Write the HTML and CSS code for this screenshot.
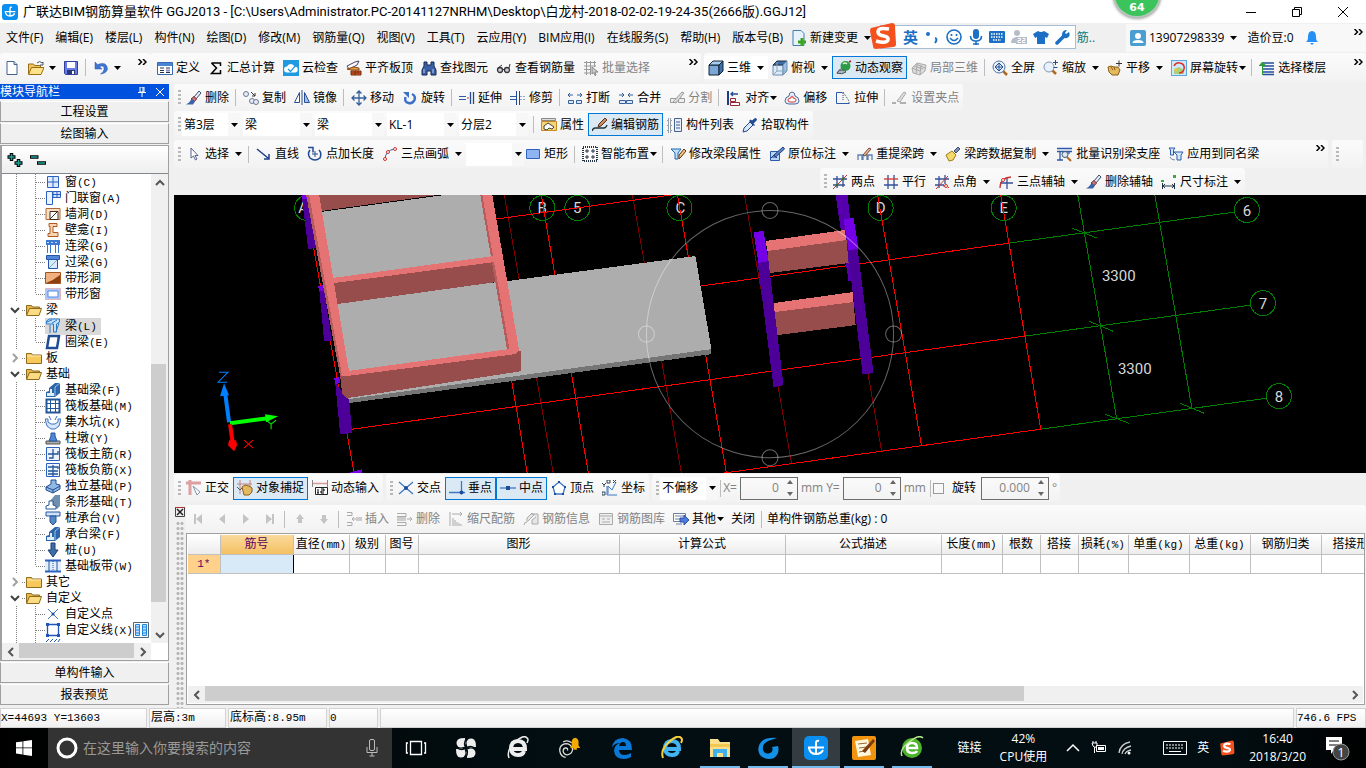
FILE: index.html
```html
<!DOCTYPE html>
<html lang="zh-CN">
<head>
  <meta charset="UTF-8">
  <title>广联达BIM钢筋算量软件 GGJ2013</title>
  <meta name="viewport" content="width=device-width, initial-scale=1.0">
  <link rel="stylesheet" href="styles.css">
</head>
<body>

<!-- icon sprite -->
<svg class="sprite" aria-hidden="true">
  <symbol id="caret" viewBox="0 0 7 4"><path d="M0 0h7L3.500 4z" fill="#000"/></symbol>
  <symbol id="more" viewBox="0 0 9 6"><path d="M.5 0l3 3-3 3M5 0l3 3-3 3" fill="none" stroke="#000" stroke-width="1.500"/></symbol>
  <symbol id="app" viewBox="0 0 24 24"><rect width="24" height="24" rx="5" fill="#0a8ff0"/><path d="M15 5q-3-1-3 2v11M4 11.500h16M5 12q1 6 7 6 5 0 7-4" fill="none" stroke="#fff" stroke-width="2"/></symbol>
  <symbol id="new" viewBox="0 0 16 16"><path d="M3 1.500h7l3 3v10H3z" fill="#fff" stroke="#44618f"/><path d="M10 1.500v3h3" fill="#cde" stroke="#44618f"/></symbol>
  <symbol id="open" viewBox="0 0 16 16"><path d="M.5 14V4h5l1 1.500h6V8" fill="#f3c55f" stroke="#9a6d10"/><path d="M.5 14.500l3-7H16l-3 7z" fill="#ffe28a" stroke="#9a6d10"/><path d="M9 3q3-3 5 0l1-1v3h-3" fill="none" stroke="#456"/></symbol>
  <symbol id="save" viewBox="0 0 16 16"><path d="M1.500 1.500h13v13h-12l-1-1z" fill="#6a7be8" stroke="#30409b"/><path d="M4 2h8v6H4z" fill="#fff"/><path d="M4 10h8v4H4z" fill="#293a78"/><path d="M9 11h2v3H9z" fill="#fff"/></symbol>
  <symbol id="undo" viewBox="0 0 16 16"><path d="M2 2v7h7L6.500 6.500q5-2 4.500 3-.5 3-3.500 4.500 6-.5 7-5Q14 1 4.500 4.500z" fill="#3f76d6" stroke="#2d56a8" stroke-width=".5"/></symbol>
  <symbol id="define" viewBox="0 0 16 16"><path d="M.5 2.500h15v12H.5z" fill="#fff" stroke="#3568b5"/><path d="M1 3h14v3H1z" fill="#4c84d4"/><path d="M3 8h4M3 10.500h4M3 12.500h4M9 8h4M9 12.500h4" stroke="#234"/><path d="M9 9.500h4v2H9z" fill="#88b"/></symbol>
  <symbol id="sum" viewBox="0 0 16 16"><path d="M3.500 3h9v3M12.500 10v3.500h-9L8.500 8l-5-5" fill="none" stroke="#000" stroke-width="1.500"/></symbol>
  <symbol id="cloud" viewBox="0 0 16 16"><rect width="16" height="16" fill="#1e9be0"/><path d="M4 12.500a3 3 0 0 1 0-6 4 4 0 0 1 7.500 0 3 3 0 0 1 .5 6z" fill="#fff"/><path d="M5 9l2.500 2.500L13 5" fill="none" stroke="#1e9be0" stroke-width="1.200"/></symbol>
  <symbol id="align-top" viewBox="0 0 16 16"><path d="M1 6l8-4 4-1-2 4-8 4z" fill="#fff" stroke="#446"/><path d="M1 9l7-2 5 1v2H5z" fill="#e7a04a" stroke="#8a4a12"/><path d="M5 11h10v4H5z" fill="#d8622c" stroke="#7a2b0b"/><path d="M5 13h10M9 11v4M12 11v2" stroke="#7a2b0b"/></symbol>
  <symbol id="find" viewBox="0 0 16 16"><path d="M3 2h3v3h4V2h3v4l2 4v5h-5v-4H6v4H1v-5l2-4z" fill="#3b5fa4" stroke="#162a55"/><path d="M3 9v4M12 9v4" stroke="#b9ccf0"/></symbol>
  <symbol id="glasses" viewBox="0 0 16 16"><circle cx="4" cy="10" r="2.500" fill="#ccd" stroke="#333" stroke-width="1.300"/><circle cx="11" cy="10" r="2.500" fill="#ccd" stroke="#333" stroke-width="1.300"/><path d="M6.500 9.500h2M2 8l4-3M13 8l1-4" stroke="#333" fill="none"/></symbol>
  <symbol id="batch" viewBox="0 0 16 16"><path d="M1 2.500h12M1 6h12M1 9.500h7M1 13h7M3.500 1v14M7.500 1v14M11.500 1v6" stroke="#999"/><path d="M9 7l6 5-3 0 1 3-1 .5-1.500-3L9 14z" fill="#ccc" stroke="#888"/></symbol>
  <symbol id="cube" viewBox="0 0 16 16"><path d="M1 5h10v10H1z" fill="#7ba7d8" stroke="#123"/><path d="M1 5l4-4h10l-4 4z" fill="#a9cbef" stroke="#123"/><path d="M11 5l4-4v10l-4 4z" fill="#3f6ea8" stroke="#123"/></symbol>
  <symbol id="topview" viewBox="0 0 16 16"><path d="M1 5h10v10H1z" fill="#dfeaf8" stroke="#6b8cb5"/><path d="M1 5l4-4h10l-4 4z" fill="#3d6ca6" stroke="#234"/><path d="M11 5l4-4v10l-4 4z" fill="#9fbfe3" stroke="#6b8cb5"/><path d="M5 2v9l-4 4M5 11h10" stroke="#8ab" fill="none"/></symbol>
  <symbol id="orbit" viewBox="0 0 16 16"><path d="M1 14q1-4 5-6" stroke="#555" fill="none"/><circle cx="9.500" cy="6" r="5" fill="#2f9a49"/><path d="M7 4q2-2 4 0" stroke="#d6f7c8" fill="none" stroke-width="1.500"/><path d="M1 13q2-4 5-3 3 0 4 2-4 3-9 1z" fill="#a9b7bf" stroke="#455"/><path d="M13 2l2-1" stroke="#b12" stroke-width="1.500"/></symbol>
  <symbol id="local3d" viewBox="0 0 16 16"><path d="M1 8l5-5 9 2-1 6-5 4-7-2z" fill="#ddd" stroke="#aaa"/><path d="M3 6l9 3M5 4l9 4M1 8l8 3M9 15l1-10M5 14l1-9" stroke="#aaa"/></symbol>
  <symbol id="fullscreen" viewBox="0 0 16 16"><path d="M11 11l4 4" stroke="#b06a20" stroke-width="2.500"/><circle cx="7" cy="7" r="6" fill="#e9f2fc" stroke="#56749f"/><path d="M3 7h8M7 3v8M5 5l2-2 2 2M5 9l2 2 2-2M5 5L3 7l2 2M9 5l2 2-2 2" stroke="#1f4e96" fill="none"/></symbol>
  <symbol id="zoom" viewBox="0 0 16 16"><path d="M9 10l4 4" stroke="#b06a20" stroke-width="2.500"/><circle cx="6" cy="7" r="5" fill="#e9f2fc" stroke="#8296b3"/><path d="M10 2.500h5M12.500 0v5M10.500 7.500h4" stroke="#2a4c86"/></symbol>
  <symbol id="pan" viewBox="0 0 16 16"><path d="M9 3.500h6M12 .5v6" stroke="#333"/><path d="M1 7l3-1 3 1 4 0 2 3-2 5H5L2 12z" fill="#e4b85c" stroke="#8b5f17"/><path d="M4 7l2 3M7 7l1 3" stroke="#8b5f17"/></symbol>
  <symbol id="screenrot" viewBox="0 0 16 16"><rect x=".5" y=".5" width="15" height="15" fill="#cfe8fb" stroke="#5aa7dd"/><path d="M3 9l5-2 5 3v4H3z" fill="#a9d17a"/><circle cx="5" cy="10" r="1.500" fill="#f0c63c"/><path d="M3 6q2-4 6-3 5 1 4 6-1 4-5 4" fill="none" stroke="#e0322c" stroke-width="1.500"/></symbol>
  <symbol id="floors" viewBox="0 0 16 16"><path d="M4 3h11M4 6h11M4 9h11M4 12h11M4 14.500h11" stroke="#214f9e" stroke-width="1.300"/><path d="M3.500 15V6M0 6l3.500-4L7 6" fill="#2f9a3c" stroke="#2f9a3c"/></symbol>
  <symbol id="brush" viewBox="0 0 16 16"><path d="M8 7l5-6 2 2-5 6z" fill="#e6edf7" stroke="#3b4d70"/><path d="M5 9l3-2.500L10.500 9 8 12z" fill="#d8756e" stroke="#7b2d28"/><path d="M0 14.500h7l2-3-3-3-3 4z" fill="#3c62a8"/></symbol>
  <symbol id="copy" viewBox="0 0 16 16"><g fill="#e6ebf4" stroke="#6a7a96"><circle cx="3" cy="4" r="2.500"/><circle cx="9" cy="11" r="2.500"/><circle cx="13" cy="12" r="2.500"/></g><path d="M8 2l4 4M12 3v3H9" stroke="#333" fill="none"/></symbol>
  <symbol id="mirror" viewBox="0 0 16 16"><path d="M5.500 2.500v10h-5z" fill="#fff" stroke="#2b4f95"/><path d="M10.500 2.500v10h5z" fill="#9fc0ee" stroke="#2b4f95"/><path d="M8 0v15" stroke="#2b4f95"/></symbol>
  <symbol id="move" viewBox="0 0 16 16"><path d="M8 1v14M1 8h14M5.500 3.500L8 1l2.500 2.500M5.500 12.500L8 15l2.500-2.500M3.500 5.500L1 8l2.500 2.500M12.500 5.500L15 8l-2.500 2.500" fill="none" stroke="#35609c" stroke-width="1.300"/></symbol>
  <symbol id="rotate" viewBox="0 0 16 16"><path d="M10 4q4 2 2.500 6-2 4-6 3Q2 12 3.500 7" fill="none" stroke="#3b70c9" stroke-width="2.500"/><path d="M1 2h6v6z" fill="#3b70c9"/></symbol>
  <symbol id="extend" viewBox="0 0 16 16"><path d="M0 6.500h7M0 9.500h7" stroke="#2c5aa8"/><path d="M8 8h2" stroke="#c33"/><path d="M11.500 2v12M14.500 2v12" stroke="#234b93" stroke-width="1.300"/></symbol>
  <symbol id="trim" viewBox="0 0 16 16"><path d="M6.500 1v14M9.500 1v14" stroke="#234b93"/><path d="M0 6.500h6M0 9.500h6" stroke="#2c5aa8"/><path d="M10 6.500h6M10 9.500h6" stroke="#8ba8d4" stroke-dasharray="2 1"/></symbol>
  <symbol id="break" viewBox="0 0 16 16"><path d="M1.500 10.500h5v3h-5zM9.500 10.500h5v3h-5z" fill="#dfe8f6" stroke="#35609c"/><path d="M6 5H1l2-2M1 5l2 2M10 5h5l-2-2M15 5l-2 2" stroke="#35609c" fill="none"/></symbol>
  <symbol id="merge" viewBox="0 0 16 16"><path d="M1.500 10.500h6v3h-6zM8.500 10.500h6v3h-6z" fill="#dfe8f6" stroke="#35609c"/><path d="M1 5h5L4 3M6 5L4 7M15 5h-5l2-2M10 5l2 2" stroke="#35609c" fill="none"/></symbol>
  <symbol id="split" viewBox="0 0 16 16"><path d="M1.500 8.500h6v4h-6zM9.500 8.500h6v4h-6z" fill="#eee" stroke="#999"/><path d="M4 12l9-10 2 1-8 10z" fill="#ddd" stroke="#999"/></symbol>
  <symbol id="alignbar" viewBox="0 0 16 16"><path d="M2 1v14" stroke="#1b3f86" stroke-width="2"/><path d="M4.500 8.500h5v3h-5zM4.500 12.500h9v3h-9z" fill="#fff" stroke="#9c2330"/><path d="M5 4h7M7 2L5 4l2 2" stroke="#234b93" fill="none" stroke-width="1.300"/></symbol>
  <symbol id="offset" viewBox="0 0 16 16"><path d="M5 6q0-4 3-4t3 4q4 1 4 5 0 3-4 3H5q-4 0-4-3 0-4 4-5z" fill="#e9eef7" stroke="#4a6a9e"/><path d="M7 8q0-2 1-2t1 2q3 0 3 2t-2 2H6q-2 0-2-2t3-2z" fill="#fff" stroke="#d23a33"/></symbol>
  <symbol id="stretch" viewBox="0 0 16 16"><path d="M7.500 2.500h-6v11h13" fill="none" stroke="#2c5aa8"/><path d="M8 2l6 9v2M8 3v8" fill="none" stroke="#345" stroke-dasharray="1 1"/></symbol>
  <symbol id="grip-pt" viewBox="0 0 16 16"><path d="M0 13h4M8 13h6" stroke="#999" stroke-width="1.500"/><path d="M5 11l7-9 2 1-6 9z" fill="#ddd" stroke="#aaa"/></symbol>
  <symbol id="props" viewBox="0 0 16 16"><path d="M.5 1.500h14v2H.5z" fill="#ddd" stroke="#888"/><path d="M.5 4.500h15v9H.5z" fill="#f6d27b" stroke="#c98a1c"/><path d="M3 12V9l4-3 6 4-2 2-3-1-2 2z" fill="#fff" stroke="#443"/></symbol>
  <symbol id="editbar" viewBox="0 0 16 16"><path d="M0 14q1-3 3-3h9q2 0 3-3" fill="none" stroke="#233" stroke-width="1.300"/><path d="M6 10l1-3 6-6 2 2-6 6z" fill="#c98a5c" stroke="#5b3320"/></symbol>
  <symbol id="list" viewBox="0 0 16 16"><path d="M1 2h3v3H1zM1 7h3v3H1zM1 12h3v3H1z" fill="#fff" stroke="#345" stroke-dasharray="1 1"/><path d="M7.500 1.500h7v13h-7z" fill="#e8eefa" stroke="#44618f"/><path d="M9 5h4M9 8h4M9 11h4" stroke="#44618f"/></symbol>
  <symbol id="picker" viewBox="0 0 16 16"><path d="M1 15l1-4 6-6 3 3-6 6z" fill="#d8e8fb" stroke="#26488a"/><path d="M7 4l5 5 1-1-1.500-1.500L15 3q0-2-2-2l-3 2.500L8.500 2.500z" fill="#234a94"/></symbol>
  <symbol id="cursor" viewBox="0 0 16 16"><path d="M5 2v10l2.500-2 2 4 1.500-1-2-3.500h3z" fill="#fff" stroke="#56658a"/></symbol>
  <symbol id="line" viewBox="0 0 16 16"><path d="M1 3l11 9M13 8v5H8" fill="none" stroke="#1e3f86" stroke-width="1.500"/></symbol>
  <symbol id="addlen" viewBox="0 0 16 16"><path d="M3 4q-3 4 0 8 5 4 10 0 2-5-1-8" fill="none" stroke="#234b93" stroke-width="1.500"/><path d="M1 1.500h5v5" fill="none" stroke="#234b93" stroke-width="1.500"/><path d="M5 8h6M8 5v6" stroke="#234b93"/></symbol>
  <symbol id="arc3" viewBox="0 0 16 16"><path d="M3 14Q3 4 13 3" fill="none" stroke="#345b9c"/><g fill="#fff" stroke="#d2322d"><circle cx="3" cy="13" r="1.500"/><circle cx="6" cy="6" r="1.500"/><circle cx="13" cy="3" r="1.500"/></g></symbol>
  <symbol id="rect" viewBox="0 0 16 16"><path d="M1.500 3.500h13v9h-13z" fill="#8fb4f2" stroke="#2f62bd"/></symbol>
  <symbol id="smart" viewBox="0 0 16 16"><rect x="1" y="1" width="14" height="14" fill="#fff" stroke="#234" stroke-width="2" stroke-dasharray="1 1"/><path d="M5 3v4M3 5h4M11 3v4M9 5h4M5 9v4M3 11h4M11 9v4M9 11h4" stroke="#234"/></symbol>
  <symbol id="beamedit" viewBox="0 0 16 16"><path d="M1 3h10L8 7v6H5V7z" fill="#bfe0fb" stroke="#1e66b4"/><path d="M9 13V9l5-6 2 2-5 6z" fill="#f0c07a" stroke="#633a14"/></symbol>
  <symbol id="annot" viewBox="0 0 16 16"><path d="M1.500 5.500h9v9h-9z" fill="#b8d3f5" stroke="#2c5aa8"/><path d="M2 12l3-3 3 3M5 9l9-8 1.500 2-9 8z" fill="#5d88c9" stroke="#1f3f7c"/></symbol>
  <symbol id="respan" viewBox="0 0 16 16"><path d="M1 14V9h4v5M6 14V9h4v5M11 14V9h4v5" fill="none" stroke="#5d7fae" stroke-width="1.300"/><path d="M6 9l6-7 2 1-6 7z" fill="#eabf80" stroke="#744"/></symbol>
  <symbol id="spancopy" viewBox="0 0 16 16"><path d="M9 5l4-4 2 2-4 4z" fill="#7d8fb5" stroke="#3b4d70"/><path d="M1 9l6-4 4 4-3 5-4 1z" fill="#f4da6a" stroke="#9c7d17"/></symbol>
  <symbol id="batchbeam" viewBox="0 0 16 16"><path d="M0 2.500h15M0 5.500h15M3 5v9M0 14h6M12 5v3" stroke="#2c5aa8" stroke-width="1.300"/><circle cx="8" cy="8.500" r="3" fill="#dbe9f8" stroke="#456"/><path d="M10 11l4 4" stroke="#b06a20" stroke-width="2"/></symbol>
  <symbol id="apply" viewBox="0 0 16 16"><path d="M1 2h6L5.500 4v5h-3V4zM6 6h9l-2 3v5H9V9z" fill="#d4e9fb" stroke="#2c5aa8"/><path d="M2 11q1 3 5 3" fill="none" stroke="#789"/></symbol>
  <symbol id="twopt" viewBox="0 0 16 16"><path d="M5 2v12M11 1v12M1 5h14M1 11h12" stroke="#35509a" stroke-width="1.300"/><path d="M1 15L15 1" stroke="#d2322d"/><circle cx="5" cy="11" r="1.500" fill="#3d6b2e"/><circle cx="11" cy="5" r="1.500" fill="#3d6b2e"/></symbol>
  <symbol id="parallel" viewBox="0 0 16 16"><path d="M5 1v14M11 1v14M1 11h14" stroke="#35509a" stroke-width="1.300"/><path d="M1 5h14" stroke="#d2322d" stroke-width="1.300"/></symbol>
  <symbol id="ptangle" viewBox="0 0 16 16"><path d="M5 2v12M11 1v9M1 5h14M1 11h9" stroke="#35509a" stroke-width="1.300"/><path d="M2 15L14 2M9 12h4M13 12l2 2" stroke="#d2322d"/><circle cx="12" cy="12" r="1.500" fill="#fff" stroke="#d2322d"/></symbol>
  <symbol id="arcaxis" viewBox="0 0 16 16"><path d="M9 3v12M2 9h13" stroke="#35509a" stroke-width="1.300"/><path d="M2 14Q2 4 13 3" fill="none" stroke="#d2322d" stroke-width="1.300"/><circle cx="5" cy="6" r="1.500" fill="#fff" stroke="#d2322d"/></symbol>
  <symbol id="dim" viewBox="0 0 16 16"><path d="M1.500 9v6M13.500 9v6M1 12h13M4 10l-2 2 2 2M11 10l2 2-2 2" stroke="#234" fill="none"/><path d="M0 6h3v2H0zM12 1h3v3h-3z" fill="#3fa545"/></symbol>
  <symbol id="ortho" viewBox="0 0 16 16"><path d="M0 3h15M4 0v15" stroke="#dca0a0" stroke-width="3"/><path d="M7 6l7 6-3 3z" fill="#fff" stroke="#8494ab"/></symbol>
  <symbol id="snap" viewBox="0 0 16 16"><path d="M3 0v14M13 0v7M0 4h15" stroke="#c4807e"/><path d="M0 7l3 3 3-3" stroke="#456" fill="none"/><path d="M5 7l3-2 4 1 3 2v4l-3 3H7z" fill="#e3ba62" stroke="#8b5f17"/></symbol>
  <symbol id="dynin" viewBox="0 0 16 16"><path d="M.5 0v7M15.500 0v7" stroke="#888"/><path d="M1 3.500h14" stroke="#d99" stroke-width="1.500"/><path d="M3.500 7.500h12v7h-12z" fill="#fff" stroke="#222"/><path d="M6 9v4M5 13h2M9 9h3v2H9v2h3" fill="none" stroke="#000"/></symbol>
  <symbol id="cross" viewBox="0 0 16 16"><path d="M1 2l14 12M15 2L1 14" stroke="#3f77c4" stroke-width="1.300"/><circle cx="8" cy="8" r="2" fill="#1b4c9e"/></symbol>
  <symbol id="perp" viewBox="0 0 16 16"><path d="M0 12.500h16M12.500 1v11" stroke="#3f77c4" stroke-width="1.300"/><circle cx="12.500" cy="12.500" r="2" fill="#1b4c9e"/></symbol>
  <symbol id="mid" viewBox="0 0 16 16"><path d="M0 8h16" stroke="#3f77c4" stroke-width="1.300"/><path d="M6 6h4v4H6z" fill="#1b4c9e"/></symbol>
  <symbol id="vertex" viewBox="0 0 16 16"><path d="M8 2l6 5-2 7H4L2 7z" fill="#fff" stroke="#3f77c4" stroke-width="1.300"/><path d="M7 1h2v2H7zM1 6h2v2H1zM13 6h2v2h-2zM3 13h2v2H3zM11 13h2v2h-2z" fill="#1b4c9e"/></symbol>
  <symbol id="coord" viewBox="0 0 16 16"><path d="M6 14V6l4 4 4-8M5 6v9h10" fill="none" stroke="#3f77c4"/><path d="M0 3l2 2 2-2M2 5v2M0 12h3v3H0zM5 0h3v3H5zM11 0l3 3M14 0l-3 3" stroke="#345" fill="none"/></symbol>
  <symbol id="first" viewBox="0 0 16 16"><path d="M4 3h2v10H4zM12 3v10L6 8z" fill="#c4c4c4"/></symbol>
  <symbol id="prev" viewBox="0 0 16 16"><path d="M11 3v10L5 8z" fill="#c4c4c4"/></symbol>
  <symbol id="next" viewBox="0 0 16 16"><path d="M5 3v10l6-5z" fill="#c4c4c4"/></symbol>
  <symbol id="last" viewBox="0 0 16 16"><path d="M10 3h2v10h-2zM4 3v10l6-5z" fill="#c4c4c4"/></symbol>
  <symbol id="up" viewBox="0 0 16 16"><path d="M8 3l4 5h-2v4H6V8H4z" fill="#c4c4c4"/></symbol>
  <symbol id="down" viewBox="0 0 16 16"><path d="M8 13l4-5h-2V4H6v4H4z" fill="#c4c4c4"/></symbol>
  <symbol id="insert" viewBox="0 0 16 16"><path d="M1 1.500h5v3H1M1 11.500h5v3H1M6 8h4M8 6L6 8l2 2" fill="none" stroke="#aaa"/><path d="M10 6h6v4h-6z" fill="#ccc"/></symbol>
  <symbol id="remove" viewBox="0 0 16 16"><path d="M0 2.500h9v3H0M0 11.500h9v3H0M10 8h5M13 6l2 2-2 2" fill="none" stroke="#aaa"/><path d="M0 6h9v4H0z" fill="#ccc"/></symbol>
  <symbol id="scale" viewBox="0 0 16 16"><path d="M2 1v14M4 3h10M12 1l2 2-2 2M5 7v8M7 9v6M9 11v4M11 12v3M13 13v2" fill="none" stroke="#aaa"/></symbol>
  <symbol id="info" viewBox="0 0 16 16"><path d="M1 14q0-3 3-3V7l5-5 2 2-6 6M8 3h7v10H9V9l4-3" fill="#e6e6e6" stroke="#aaa"/></symbol>
  <symbol id="lib" viewBox="0 0 16 16"><path d="M1.500 2.500h13v11h-13z" fill="#eee" stroke="#aaa"/><path d="M2 5h12M4 8h3M4 11h8M9 8h3" stroke="#aaa"/></symbol>
  <symbol id="other" viewBox="0 0 16 16"><path d="M.5 2.500h12v8H.5z" fill="#fff" stroke="#6d7f9e"/><path d="M2 5h9M2 8h5M3 13h6" stroke="#6d7f9e"/><path d="M7 7h4V4l5 5-5 5v-3H7z" fill="#4d7ddc" stroke="#2a4fa3"/></symbol>
  <symbol id="newchg" viewBox="0 0 16 16"><path d="M2 .5h8l3 3v12H2z" fill="#e8f2fb" stroke="#3f7fb0"/><path d="M11 8v8M7 12h8" stroke="#3aa51e" stroke-width="3"/></symbol>
  <symbol id="user" viewBox="0 0 16 16"><rect width="16" height="16" rx="2" fill="#4a9fd0"/><circle cx="8" cy="6" r="3" fill="#fff"/><path d="M2.500 13q0-3 5.500-3t5.500 3z" fill="#fff"/></symbol>
  <symbol id="bell" viewBox="0 0 16 16"><path d="M8 1q4 0 4 6 0 4 2 5H2q2-1 2-5 0-6 4-6z" fill="#2490f5"/><path d="M6 13h4l-2 2z" fill="#2490f5"/></symbol>

  <!-- tree guides -->
  <symbol id="t-mid" viewBox="0 0 44 16"><path d="M15.500 0v16M34.500 0v16M35 8.500h9" stroke="#808080" stroke-dasharray="1 1" fill="none"/></symbol>
  <symbol id="t-end" viewBox="0 0 44 16"><path d="M15.500 0v16M34.500 0v8M35 8.500h9" stroke="#808080" stroke-dasharray="1 1" fill="none"/></symbol>
  <symbol id="t-open" viewBox="0 0 25 16"><path d="M10 6l4 4 4-4" stroke="#404040" stroke-width="2" fill="none"/><path d="M21 8.500h4" stroke="#808080" stroke-dasharray="1 1"/></symbol>
  <symbol id="t-shut" viewBox="0 0 25 16"><path d="M12 4l4 4-4 4" stroke="#a0a0a0" stroke-width="2" fill="none"/><path d="M21 8.500h4" stroke="#808080" stroke-dasharray="1 1"/></symbol>
  <symbol id="fo" viewBox="0 0 16 16"><path d="M.5 13V3.500h5l1 1.500h7v2" fill="#e7b94a" stroke="#8d6a1c"/><path d="M.5 13.500l3-7h12l-2.500 7z" fill="#fbdc82" stroke="#8d6a1c"/></symbol>
  <symbol id="fc" viewBox="0 0 16 16"><path d="M.5 13.500v-10h5l1 1.500h9v8.500z" fill="#f6c95a" stroke="#8d6a1c"/><path d="M1 6h14" stroke="#ffeeb5"/></symbol>
  <symbol id="n-win" viewBox="0 0 16 16"><path d="M2.500 2.500h11v11h-11z" fill="#dcebff" stroke="#2b60c0"/><path d="M8 2v12M2 8h12" stroke="#2b60c0"/></symbol>
  <symbol id="n-door" viewBox="0 0 16 16"><path d="M1.500 1.500h6v13h-6z" fill="#e9f2ff" stroke="#2b60c0"/><path d="M8 1.500h7.500v6H8zM12 1v7M8 4.500h8" fill="#cfe2ff" stroke="#2b60c0"/></symbol>
  <symbol id="n-hole" viewBox="0 0 16 16"><path d="M1 2.500h14v11H1z" fill="#f9dfc8" stroke="#b26a35"/><path d="M5 5.500h8v8H5zM5 13l8-8" fill="#fff" stroke="#442a1a"/></symbol>
  <symbol id="n-niche" viewBox="0 0 16 16"><path d="M4 1.500h8v3H8v6h5v4H3v-3h2v-7H4z" fill="#f8d5b4" stroke="#b0581c"/></symbol>
  <symbol id="n-link" viewBox="0 0 16 16"><path d="M1 2h14v5H1z" fill="#3c77d0"/><path d="M2.500 7v8M5.500 7v8M10.500 7v8M13.500 7v8" stroke="#3c77d0"/><path d="M2 4.500h12" stroke="#bcd7ff" stroke-dasharray="2 2"/></symbol>
  <symbol id="n-lintel" viewBox="0 0 16 16"><path d="M1.500 1.500h13v4h-13z" fill="#4f86d8" stroke="#2456a8"/><path d="M3.500 5.500h9v9h-9z" fill="#d9e9ff" stroke="#2456a8"/><path d="M4 14l8-8" stroke="#8ab"/></symbol>
  <symbol id="n-band" viewBox="0 0 16 16"><path d="M.5 2.500h15v11H.5z" fill="#f0b080" stroke="#a0561c"/><path d="M1 13q8-3 14-8v8z" fill="#8e3f10"/></symbol>
  <symbol id="n-bandw" viewBox="0 0 16 16"><path d="M.5 2.500h15v11H.5z" fill="#a9c8fa" stroke="#e3b7b7"/><path d="M3 5h10v6H3z" fill="#fff" stroke="#5a8be0"/></symbol>
  <symbol id="n-beam" viewBox="0 0 16 16"><path d="M1.500 3l3-2h10v3l-3 2v8h-3V6h-7z" fill="#c4e2fb" stroke="#2a78c8"/><path d="M5 15V7M2 4l5-2M7 5l5-3M11 14l3-9" stroke="#2a78c8"/></symbol>
  <symbol id="n-ring" viewBox="0 0 16 16"><path d="M4 2h10l-2 12H2z" fill="#fff" stroke="#1f4d94" stroke-width="2.500"/></symbol>
  <symbol id="n-fbeam" viewBox="0 0 16 16"><path d="M1 15v-5l3-1V6l6-5h5v10l-5 4z" fill="#2b66a8"/><path d="M2 14v-3h3V7h2v4h2v3z" fill="#dcecfb"/><path d="M10 5l5-4M10 14V5" stroke="#9cc3ea"/></symbol>
  <symbol id="n-raft" viewBox="0 0 16 16"><path d="M1.500 1.500h13v13h-13z" fill="#fff" stroke="#24569a" stroke-width="2"/><path d="M5.500 1v14M10.500 1v14M1 5.500h14M1 10.500h14" stroke="#24569a"/></symbol>
  <symbol id="n-pit" viewBox="0 0 16 16"><path d="M0 5h3v3l3 2h4l3-2V5h3l-2 7-4 3H6l-4-3z" fill="#d6e6fb" stroke="#3e74c4"/><path d="M4 2l2 4M12 2l-2 4" stroke="#3e74c4"/></symbol>
  <symbol id="n-pier" viewBox="0 0 16 16"><path d="M1 11h14v3H1z" fill="#aaa" stroke="#555"/><path d="M4 11l2-5V3h4v3l2 5z" fill="#4f86d8" stroke="#24569a"/></symbol>
  <symbol id="n-main" viewBox="0 0 16 16"><path d="M1.500 1.500h13v13h-13z" fill="#edf4ff" stroke="#2b60c0"/><path d="M8 3v9H4M3 8h10V5" fill="none" stroke="#24569a" stroke-width="1.300"/></symbol>
  <symbol id="n-neg" viewBox="0 0 16 16"><path d="M1.500 1.500h13v13h-13z" fill="#edf4ff" stroke="#2b60c0"/><path d="M8 3v11M3 5h10v2M3 9h10M3 12h10" fill="none" stroke="#24569a" stroke-width="1.300"/></symbol>
  <symbol id="n-iso" viewBox="0 0 16 16"><path d="M1 9l5-3V2h5v4l4 1v4l-7 4-7-3z" fill="#8fb8e4" stroke="#1f4d94"/><path d="M1 9l7 3 7-4M8 12v3" fill="none" stroke="#1f4d94"/></symbol>
  <symbol id="n-strip" viewBox="0 0 16 16"><path d="M5 7l5-6h5v11l-3 3z" fill="#6f8fae"/><path d="M1 15v-3l3-1V7h4v4l3 1v3z" fill="#fff" stroke="#24569a"/></symbol>
  <symbol id="n-cap" viewBox="0 0 16 16"><path d="M1 2h14v4H1z" fill="#cfe2f7" stroke="#24569a"/><path d="M5 6h6v6l-3 3-3-3z" fill="#5589c6" stroke="#24569a"/></symbol>
  <symbol id="n-pile" viewBox="0 0 16 16"><path d="M6 1h4v7h3l-5 7-5-7h3z" fill="#3c6ea8" stroke="#1b3f70"/></symbol>
  <symbol id="n-slab" viewBox="0 0 16 16"><path d="M0 2h16v12H0z" fill="#e3efff"/><path d="M0 2.500h16M0 13.500h16" stroke="#2b60c0" stroke-width="2"/><path d="M4 3v10M12 3v10" stroke="#24569a"/><path d="M8 3v10" stroke="#24569a" stroke-dasharray="1 1"/></symbol>
  <symbol id="n-point" viewBox="0 0 16 16"><path d="M3 3l10 10M13 3L3 13" stroke="#3f77c4"/><circle cx="8" cy="8" r="1.500" fill="#1b4c9e"/></symbol>
  <symbol id="n-line" viewBox="0 0 16 16"><path d="M2.500 2.500h11v11h-11z" fill="#fff" stroke="#1f55b8" stroke-width="1.300"/><path d="M1 1h3v3H1zM12 1h3v3h-3zM1 12h3v3H1zM12 12h3v3h-3z" fill="#1f55b8"/></symbol>
  <symbol id="n-area" viewBox="0 0 16 16"><path d="M1 4l3-3M5 4l3-3M9 4l3-3M13 4l2-3" stroke="#1f55b8"/></symbol>
  <symbol id="s-up" viewBox="0 0 10 10"><path d="M1 7l4-4 4 4" fill="none" stroke="#555" stroke-width="2"/></symbol>
  <symbol id="s-down" viewBox="0 0 10 10"><path d="M1 3l4 4 4-4" fill="none" stroke="#555" stroke-width="2"/></symbol>
  <symbol id="s-left" viewBox="0 0 10 10"><path d="M7 1L3 5l4 4" fill="none" stroke="#555" stroke-width="2"/></symbol>
  <symbol id="s-right" viewBox="0 0 10 10"><path d="M3 1l4 4-4 4" fill="none" stroke="#555" stroke-width="2"/></symbol>
  <symbol id="spin" viewBox="0 0 6 16"><path d="M0 4l3-4 3 4zM0 12l3 4 3-4z" fill="#666"/></symbol>
</svg>

<header class="titlebar">
  <svg class="icon"><use href="#app"/></svg>
  <h1>广联达BIM钢筋算量软件 GGJ2013 - [C:\Users\Administrator.PC-20141127NRHM\Desktop\白龙村-2018-02-02-19-24-35(2666版).GGJ12]</h1>
  <div class="winbtns">
    <button aria-label="最小化"><svg viewBox="0 0 10 10"><path d="M0 5.500h10" stroke="#000"/></svg></button>
    <button aria-label="还原"><svg viewBox="0 0 10 10"><path d="M.5 2.500h7v7h-7zM2.500 2.500v-2h7v7h-2" fill="none" stroke="#000"/></svg></button>
    <button aria-label="关闭"><svg viewBox="0 0 10 10"><path d="M0 0l10 10M10 0L0 10" stroke="#000"/></svg></button>
  </div>
</header>
<div class="bubble">64</div>

<nav class="menubar">
  <a href="#">文件(F)</a><a href="#">编辑(E)</a><a href="#">楼层(L)</a><a href="#">构件(N)</a><a href="#">绘图(D)</a><a href="#">修改(M)</a><a href="#">钢筋量(Q)</a><a href="#">视图(V)</a><a href="#">工具(T)</a><a href="#">云应用(Y)</a><a href="#">BIM应用(I)</a><a href="#">在线服务(S)</a><a href="#">帮助(H)</a><a href="#">版本号(B)</a>
  <button class="tool wide"><svg class="icon"><use href="#newchg"/></svg>新建变更<svg class="caret"><use href="#caret"/></svg></button>
  <a class="ticker" href="#">筋..</a>
  <div class="account">
    <button class="tool wide"><svg class="icon"><use href="#user"/></svg>13907298339<svg class="caret"><use href="#caret"/></svg></button>
    <a href="#">造价豆:0</a>
    <button class="tool" aria-label="消息"><svg class="icon"><use href="#bell"/></svg></button>
    <svg class="more"><use href="#more"/></svg>
  </div>
</nav>

<!-- floating input method bar -->
<div class="ime">
  <svg class="ime-logo" viewBox="0 0 28 28"><path d="M2 6L23 1q3 0 3 3l1 18q0 3-3 3L7 27q-3 0-3-3L1 9q0-2 1-3z" fill="#f4511e"/><path d="M20 7q-11-2-11 3 0 3 6 4 5 1 4 4-2 4-12 1" fill="none" stroke="#fff" stroke-width="3.500"/></svg>
  <b>英</b>
  <svg viewBox="0 0 16 16"><circle cx="4" cy="5" r="2" fill="#1b6fc4"/><path d="M11 9q3 1 0 5" fill="none" stroke="#1b6fc4" stroke-width="2"/></svg>
  <svg viewBox="0 0 16 16"><circle cx="8" cy="8" r="7" fill="none" stroke="#1b6fc4" stroke-width="1.600"/><path d="M4 9q4 5 8 0M5.500 5v2M10.500 5v2" fill="none" stroke="#1b6fc4" stroke-width="1.600"/></svg>
  <svg viewBox="0 0 16 16"><rect x="5" y="0" width="6" height="10" rx="3" fill="#1b6fc4"/><path d="M2.500 7q0 5 5.500 5t5.500-5M8 12v4M5 15h6" fill="none" stroke="#1b6fc4" stroke-width="1.600"/></svg>
  <svg viewBox="0 0 16 16"><rect x="0" y="2" width="16" height="12" rx="1" fill="#1b6fc4"/><path d="M2 5h12M2 8h12M4 11h8" stroke="#fff" stroke-width="1.500" stroke-dasharray="1.500 1"/></svg>
  <svg viewBox="0 0 16 16"><circle cx="6" cy="4" r="3" fill="#b5bdc9"/><path d="M0 14q0-6 6-6v6z" fill="#b5bdc9"/><rect x="5" y="8" width="11" height="7" fill="#b5bdc9"/><path d="M7 9.500h2.500v2H7v2h3M11.500 9.500H14v2h-2.500v2h3" fill="none" stroke="#fff"/></svg>
  <svg viewBox="0 0 16 16"><path d="M5 2q3 2 6 0l5 3-2 4-2-1v7H4V8L2 9 0 5z" fill="#1b6fc4"/></svg>
  <svg viewBox="0 0 16 16"><path d="M2 14l7-7" stroke="#1b6fc4" stroke-width="3.500" stroke-linecap="round"/><path d="M14 3l-3 2-1-1 2-3q-5 0-5 5 1 4 5 3 4-2 2-6z" fill="#1b6fc4"/></svg>
</div>

<div class="bars-top">
  <div class="toolbar files">
    <button class="tool" aria-label="新建"><svg class="icon"><use href="#new"/></svg></button>
    <button class="tool" aria-label="打开"><svg class="icon"><use href="#open"/></svg><svg class="caret"><use href="#caret"/></svg></button>
    <button class="tool" aria-label="保存"><svg class="icon"><use href="#save"/></svg></button>
    <i class="sep"></i>
    <button class="tool wide" aria-label="撤销"><svg class="icon"><use href="#undo"/></svg><svg class="caret"><use href="#caret"/></svg></button>
    <svg class="more"><use href="#more"/></svg>
  </div>
  <div class="toolbar common">
    <button class="tool"><svg class="icon"><use href="#define"/></svg>定义</button>
    <button class="tool"><svg class="icon"><use href="#sum"/></svg>汇总计算</button>
    <button class="tool"><svg class="icon"><use href="#cloud"/></svg>云检查</button>
    <button class="tool"><svg class="icon"><use href="#align-top"/></svg>平齐板顶</button>
    <button class="tool"><svg class="icon"><use href="#find"/></svg>查找图元</button>
    <button class="tool"><svg class="icon"><use href="#glasses"/></svg>查看钢筋量</button>
    <button class="tool off"><svg class="icon"><use href="#batch"/></svg>批量选择</button>
    <svg class="more"><use href="#more"/></svg>
  </div>
  <div class="toolbar views">
    <button class="tool wide white"><svg class="icon"><use href="#cube"/></svg>三维<svg class="caret"><use href="#caret"/></svg></button>
    <button class="tool wide"><svg class="icon"><use href="#topview"/></svg>俯视<svg class="caret"><use href="#caret"/></svg></button>
    <button class="tool on"><svg class="icon"><use href="#orbit"/></svg>动态观察</button>
    <button class="tool off"><svg class="icon"><use href="#local3d"/></svg>局部三维</button>
    <i class="sep"></i>
    <button class="tool"><svg class="icon"><use href="#fullscreen"/></svg>全屏</button>
    <button class="tool wide"><svg class="icon"><use href="#zoom"/></svg>缩放<svg class="caret"><use href="#caret"/></svg></button>
    <button class="tool wide"><svg class="icon"><use href="#pan"/></svg>平移<svg class="caret"><use href="#caret"/></svg></button>
    <button class="tool"><svg class="icon"><use href="#screenrot"/></svg>屏幕旋转<svg class="caret"><use href="#caret"/></svg></button>
    <i class="sep"></i>
    <button class="tool"><svg class="icon"><use href="#floors"/></svg>选择楼层</button>
    <svg class="more"><use href="#more"/></svg>
  </div>
</div>

<div class="main">

  <aside class="nav">
    <div class="nav-head"><span>模块导航栏</span>
      <svg viewBox="0 0 10 10"><path d="M3 0h4v5H3zM1 5.500h8M5 6v4M6 0v5" stroke="#fff" fill="none"/></svg>
      <svg viewBox="0 0 10 10"><path d="M1 1l8 8M9 1L1 9" stroke="#fff"/></svg>
    </div>
    <button class="nav-btn">工程设置</button>
    <button class="nav-btn">绘图输入</button>
    <div class="nav-body">
      <div class="nav-tools">
        <button aria-label="全部展开"><svg viewBox="0 0 16 16"><g stroke="#000" stroke-width="3.500"><path d="M4.500 1v8M.5 5h8M11.500 7v8M7.500 11h8"/></g><g stroke="#1aa39a" stroke-width="1.500"><path d="M4.500 2v6M1.500 5h6M11.500 8v6M8.500 11h6"/></g></svg></button>
        <button aria-label="全部折叠"><svg viewBox="0 0 16 16"><path d="M0 5h8.500M7 11h9" stroke="#000" stroke-width="3.500"/><path d="M1 5h6.500M8 11h7" stroke="#1aa39a" stroke-width="1.500"/></svg></button>
      </div>
      <div class="tree-box">
        <ul class="tree">
          <li><svg class="guide"><use href="#t-mid"/></svg><svg class="icon"><use href="#n-win"/></svg><span>窗<kbd>(C)</kbd></span></li>
          <li><svg class="guide"><use href="#t-mid"/></svg><svg class="icon"><use href="#n-door"/></svg><span>门联窗<kbd>(A)</kbd></span></li>
          <li><svg class="guide"><use href="#t-mid"/></svg><svg class="icon"><use href="#n-hole"/></svg><span>墙洞<kbd>(D)</kbd></span></li>
          <li><svg class="guide"><use href="#t-mid"/></svg><svg class="icon"><use href="#n-niche"/></svg><span>壁龛<kbd>(I)</kbd></span></li>
          <li><svg class="guide"><use href="#t-mid"/></svg><svg class="icon"><use href="#n-link"/></svg><span>连梁<kbd>(G)</kbd></span></li>
          <li><svg class="guide"><use href="#t-mid"/></svg><svg class="icon"><use href="#n-lintel"/></svg><span>过梁<kbd>(G)</kbd></span></li>
          <li><svg class="guide"><use href="#t-mid"/></svg><svg class="icon"><use href="#n-band"/></svg><span>带形洞</span></li>
          <li><svg class="guide"><use href="#t-end"/></svg><svg class="icon"><use href="#n-bandw"/></svg><span>带形窗</span></li>
          <li><svg class="guide fold"><use href="#t-open"/></svg><svg class="icon"><use href="#fo"/></svg><span>梁</span></li>
          <li class="picked"><svg class="guide"><use href="#t-mid"/></svg><svg class="icon"><use href="#n-beam"/></svg><span>梁<kbd>(L)</kbd></span></li>
          <li><svg class="guide"><use href="#t-end"/></svg><svg class="icon"><use href="#n-ring"/></svg><span>圈梁<kbd>(E)</kbd></span></li>
          <li><svg class="guide fold"><use href="#t-shut"/></svg><svg class="icon"><use href="#fc"/></svg><span>板</span></li>
          <li><svg class="guide fold"><use href="#t-open"/></svg><svg class="icon"><use href="#fo"/></svg><span>基础</span></li>
          <li><svg class="guide"><use href="#t-mid"/></svg><svg class="icon"><use href="#n-fbeam"/></svg><span>基础梁<kbd>(F)</kbd></span></li>
          <li><svg class="guide"><use href="#t-mid"/></svg><svg class="icon"><use href="#n-raft"/></svg><span>筏板基础<kbd>(M)</kbd></span></li>
          <li><svg class="guide"><use href="#t-mid"/></svg><svg class="icon"><use href="#n-pit"/></svg><span>集水坑<kbd>(K)</kbd></span></li>
          <li><svg class="guide"><use href="#t-mid"/></svg><svg class="icon"><use href="#n-pier"/></svg><span>柱墩<kbd>(Y)</kbd></span></li>
          <li><svg class="guide"><use href="#t-mid"/></svg><svg class="icon"><use href="#n-main"/></svg><span>筏板主筋<kbd>(R)</kbd></span></li>
          <li><svg class="guide"><use href="#t-mid"/></svg><svg class="icon"><use href="#n-neg"/></svg><span>筏板负筋<kbd>(X)</kbd></span></li>
          <li><svg class="guide"><use href="#t-mid"/></svg><svg class="icon"><use href="#n-iso"/></svg><span>独立基础<kbd>(P)</kbd></span></li>
          <li><svg class="guide"><use href="#t-mid"/></svg><svg class="icon"><use href="#n-strip"/></svg><span>条形基础<kbd>(T)</kbd></span></li>
          <li><svg class="guide"><use href="#t-mid"/></svg><svg class="icon"><use href="#n-cap"/></svg><span>桩承台<kbd>(V)</kbd></span></li>
          <li><svg class="guide"><use href="#t-mid"/></svg><svg class="icon"><use href="#n-fbeam"/></svg><span>承台梁<kbd>(F)</kbd></span></li>
          <li><svg class="guide"><use href="#t-mid"/></svg><svg class="icon"><use href="#n-pile"/></svg><span>桩<kbd>(U)</kbd></span></li>
          <li><svg class="guide"><use href="#t-end"/></svg><svg class="icon"><use href="#n-slab"/></svg><span>基础板带<kbd>(W)</kbd></span></li>
          <li><svg class="guide fold"><use href="#t-shut"/></svg><svg class="icon"><use href="#fc"/></svg><span>其它</span></li>
          <li><svg class="guide fold"><use href="#t-open"/></svg><svg class="icon"><use href="#fo"/></svg><span>自定义</span></li>
          <li><svg class="guide"><use href="#t-mid"/></svg><svg class="icon"><use href="#n-point"/></svg><span>自定义点</span></li>
          <li><svg class="guide"><use href="#t-mid"/></svg><svg class="icon"><use href="#n-line"/></svg><span>自定义线<kbd>(X)</kbd></span><svg class="icon" viewBox="0 0 16 16"><path d="M.5.5h15v15H.5z" fill="#fff" stroke="#567"/><path d="M2.500 2.500h4v11h-4zM9.500 2.500h4v11h-4z" fill="#bfe0ff" stroke="#1c86e0"/><path d="M3 5h3M3 8h3M3 11h3M10 5h3M10 8h3M10 11h3" stroke="#1c86e0"/></svg></li>
          <li><svg class="guide"><use href="#t-mid"/></svg><svg class="icon"><use href="#n-area"/></svg></li>
        </ul>
        <div class="vbar">
          <button aria-label="向上滚动"><svg><use href="#s-up"/></svg></button>
          <i class="before"></i><i class="thumb"></i><i class="after"></i>
          <button aria-label="向下滚动"><svg><use href="#s-down"/></svg></button>
        </div>
        <div class="hbar">
          <button aria-label="向左滚动"><svg><use href="#s-left"/></svg></button>
          <i class="thumb"></i>
          <button aria-label="向右滚动"><svg><use href="#s-right"/></svg></button>
        </div>
      </div>
    </div>
    <button class="nav-btn">单构件输入</button>
    <button class="nav-btn">报表预览</button>
  </aside>

  <section class="work">
    <div class="row">
      <div class="toolbar">
        <i class="grip"></i>
        <button class="tool"><svg class="icon"><use href="#brush"/></svg>删除</button>
        <i class="sep"></i>
        <button class="tool"><svg class="icon"><use href="#copy"/></svg>复制</button>
        <button class="tool"><svg class="icon"><use href="#mirror"/></svg>镜像</button>
        <i class="sep"></i>
        <button class="tool"><svg class="icon"><use href="#move"/></svg>移动</button>
        <button class="tool"><svg class="icon"><use href="#rotate"/></svg>旋转</button>
        <i class="sep"></i>
        <button class="tool"><svg class="icon"><use href="#extend"/></svg>延伸</button>
        <button class="tool"><svg class="icon"><use href="#trim"/></svg>修剪</button>
        <i class="sep"></i>
        <button class="tool"><svg class="icon"><use href="#break"/></svg>打断</button>
        <button class="tool"><svg class="icon"><use href="#merge"/></svg>合并</button>
        <button class="tool off"><svg class="icon"><use href="#split"/></svg>分割</button>
        <i class="sep"></i>
        <button class="tool"><svg class="icon"><use href="#alignbar"/></svg>对齐<svg class="caret"><use href="#caret"/></svg></button>
        <button class="tool"><svg class="icon"><use href="#offset"/></svg>偏移</button>
        <button class="tool"><svg class="icon"><use href="#stretch"/></svg>拉伸</button>
        <i class="sep"></i>
        <button class="tool off"><svg class="icon"><use href="#grip-pt"/></svg>设置夹点</button>
      </div>
    </div>

    <div class="row">
      <div class="toolbar">
        <i class="grip"></i>
        <label class="combo short"><select aria-label="楼层"><option>第3层</option></select><svg class="caret"><use href="#caret"/></svg></label>
        <label class="combo"><select aria-label="构件类别"><option>梁</option></select><svg class="caret"><use href="#caret"/></svg></label>
        <label class="combo"><select aria-label="构件类型"><option>梁</option></select><svg class="caret"><use href="#caret"/></svg></label>
        <label class="combo"><select aria-label="构件名称"><option>KL-1</option></select><svg class="caret"><use href="#caret"/></svg></label>
        <label class="combo"><select aria-label="分层"><option>分层2</option></select><svg class="caret"><use href="#caret"/></svg></label>
        <i class="sep"></i>
        <button class="tool"><svg class="icon"><use href="#props"/></svg>属性</button>
        <button class="tool on"><svg class="icon"><use href="#editbar"/></svg>编辑钢筋</button>
        <button class="tool"><svg class="icon"><use href="#list"/></svg>构件列表</button>
        <button class="tool"><svg class="icon"><use href="#picker"/></svg>拾取构件</button>
      </div>
    </div>

    <div class="row draw">
      <div class="toolbar grow">
        <i class="grip"></i>
        <button class="tool wide"><svg class="icon"><use href="#cursor"/></svg>选择<svg class="caret"><use href="#caret"/></svg></button>
        <i class="sep"></i>
        <button class="tool"><svg class="icon"><use href="#line"/></svg>直线</button>
        <button class="tool"><svg class="icon"><use href="#addlen"/></svg>点加长度</button>
        <button class="tool wide"><svg class="icon"><use href="#arc3"/></svg>三点画弧<svg class="caret"><use href="#caret"/></svg></button>
        <label class="combo short last"><select aria-label="半径"><option></option></select><svg class="caret"><use href="#caret"/></svg></label>
        <button class="tool"><svg class="icon"><use href="#rect"/></svg>矩形</button>
        <i class="sep"></i>
        <button class="tool"><svg class="icon"><use href="#smart"/></svg>智能布置<svg class="caret"><use href="#caret"/></svg></button>
        <i class="sep"></i>
        <button class="tool"><svg class="icon"><use href="#beamedit"/></svg>修改梁段属性</button>
        <button class="tool wide"><svg class="icon"><use href="#annot"/></svg>原位标注<svg class="caret"><use href="#caret"/></svg></button>
        <button class="tool wide"><svg class="icon"><use href="#respan"/></svg>重提梁跨<svg class="caret"><use href="#caret"/></svg></button>
        <button class="tool wide"><svg class="icon"><use href="#spancopy"/></svg>梁跨数据复制<svg class="caret"><use href="#caret"/></svg></button>
        <button class="tool"><svg class="icon"><use href="#batchbeam"/></svg>批量识别梁支座</button>
        <button class="tool"><svg class="icon"><use href="#apply"/></svg>应用到同名梁</button>
        <svg class="more"><use href="#more"/></svg>
      </div>
      <div class="toolbar stub"><i class="grip"></i></div>
    </div>

    <div class="row axis">
      <div class="toolbar">
        <i class="grip"></i>
        <button class="tool"><svg class="icon"><use href="#twopt"/></svg>两点</button>
        <button class="tool"><svg class="icon"><use href="#parallel"/></svg>平行</button>
        <button class="tool wide"><svg class="icon"><use href="#ptangle"/></svg>点角<svg class="caret"><use href="#caret"/></svg></button>
        <button class="tool wide"><svg class="icon"><use href="#arcaxis"/></svg>三点辅轴<svg class="caret"><use href="#caret"/></svg></button>
        <button class="tool"><svg class="icon"><use href="#brush"/></svg>删除辅轴</button>
        <button class="tool wide"><svg class="icon"><use href="#dim"/></svg>尺寸标注<svg class="caret"><use href="#caret"/></svg></button>
      </div>
    </div>

    <svg class="canvas" viewBox="174 195 1191 278" preserveAspectRatio="xMinYMin slice">
      <!-- axis bubbles -->
      <g fill="none" stroke="#008000" shape-rendering="crispEdges">
        <circle cx="307" cy="208" r="12.500"/><circle cx="542" cy="208" r="12.500"/><circle cx="577" cy="208" r="12.500"/>
        <circle cx="679" cy="208" r="12.500"/><circle cx="880" cy="208" r="12.500"/><circle cx="1003" cy="208" r="12.500"/>
        <circle cx="1246" cy="210" r="12.500"/><circle cx="1262" cy="303" r="12.500"/><circle cx="1278" cy="396" r="12.500"/>
      </g>
      <g class="mark">
        <text x="303" y="213">A</text><text x="542" y="213">B</text><text x="577" y="213">5</text><text x="680" y="213">C</text>
        <text x="880" y="213">D</text><text x="1003" y="213">E</text><text x="1246" y="216">6</text><text x="1262" y="309">7</text><text x="1278" y="402">8</text>
        <text x="1118" y="281">3300</text><text x="1134" y="374">3300</text>
      </g>
      <!-- grid -->
      <g shape-rendering="crispEdges" fill="none">
        <path stroke="#800000" d="M504 195L553 473M632 195L681 473M744 195L791 463M836 195L881 451"/>
        <path stroke="#f00" d="M304 195L354 473M480 195L527 473M541 195L588 473M677 195L726 473M877 195L921 446M1000 195L1040 429
          M496 219L671 195M700 286L1009 243M352 429L1024 336M722 473L1040 429"/>
        <path stroke="#008000" d="M1009 243L1234 212M1024 336L1250 305M1040 429L1266 398M1077 195L1116 419M1154 195L1191 408
          M1071 228L1096 238M1088 321L1112 331M1104 414L1128 423M1179 403L1203 413"/>
      </g>
      <!-- slabs and beams -->
      <g shape-rendering="crispEdges">
        <path fill="#adadad" d="M507 281L695 256 711 349 348 399 345 385 505 360zM320 212L444 195H483L495 258 332 280zM336 303L497 282 509 352 348 372z"/>
        <path fill="#757575" d="M348 399L711 349V354L348 403z"/>
        <path fill="#4c0099" d="M302 198L308 198 316 248 308 249zM319 288L324 290 332 341 324 341zM335 382L341 390 349 400 352 433 340 434z"/>
        <path fill="#7300e6" d="M302 195h7v4h-7zM318 286l5-1 1 6h-5zM334 378l5-1 1 6-5 1zM350 472l12-3v4h-12z"/>
        <path fill="#984d4d" d="M319 195H437L321 211zM334 283L494 262 496 282 337 304zM340 375L346 376 518 351 521 351 521 371 347 398 342 394z"/>
        <path fill="#b55c5c" d="M306 195L309 195 343 376 340 376zM480 195L483 195 510 351 507 351z"/>
        <path fill="#e57373" d="M309 195H319L349 372 342 376zM482 195H492L519 351 510 354zM332 278L493 256 494 262 334 283zM347 371L508 349 518 351 515 354 346 376 340 375z"/>
        <path fill="#5600ad" d="M835 195H847L856 280 848 281z"/>
        <path fill="#984d4d" d="M767 251L846 240 848 263 769 273zM774 312L853 302 855 325 777 335z"/>
        <path fill="#e57373" d="M765 241L844 230 846 240 767 251zM773 303L852 292 853 302 774 312z"/>
        <path fill="#4c0099" d="M757 262L768 261 783 385 773 387zM847 250L857 249 873 373 862 374z"/>
        <path fill="#7300e6" d="M753 232L763 231 768 261 758 263zM843 219L853 218 858 249 848 250z"/>
      </g>
      <!-- orbit handles -->
      <g fill="none" stroke="#fff" stroke-opacity=".4">
        <circle cx="769.500" cy="334" r="123.500"/><circle cx="769.500" cy="210.500" r="8"/><circle cx="769.500" cy="457.500" r="8"/><circle cx="646" cy="334" r="8"/><circle cx="893" cy="334" r="8"/>
      </g>
      <!-- coordinate axes -->
      <path stroke="#0080ff" stroke-width="4" d="M225 392L229 422"/><path fill="#0080ff" d="M224 383l5 12-9 1z"/>
      <path stroke="#0f0" stroke-width="4" d="M230 423L268 418"/><path fill="#0f0" d="M278 416l-12 6-1-8z"/>
      <path stroke="#f00" stroke-width="4" d="M230 424L233 445"/><path fill="#f00" d="M234 451l-6-6 1-5 7 0 1 5z"/>
      <path fill="none" stroke="#0080ff" d="M219 372h9l-10 10h9"/><path fill="none" stroke="#0f0" d="M266 420l5 4 5-4M271 424v5"/><path fill="none" stroke="#f00" d="M244 440l9 8M253 440l-9 8"/>
    </svg>

    <div class="row snap">
      <div class="toolbar">
        <i class="grip"></i>
        <button class="tool"><svg class="icon"><use href="#ortho"/></svg>正交</button>
        <button class="tool on"><svg class="icon"><use href="#snap"/></svg>对象捕捉</button>
        <button class="tool"><svg class="icon"><use href="#dynin"/></svg>动态输入</button>
      </div>
      <div class="toolbar">
        <i class="grip"></i>
        <button class="tool"><svg class="icon"><use href="#cross"/></svg>交点</button>
        <button class="tool on"><svg class="icon"><use href="#perp"/></svg>垂点</button>
        <button class="tool on"><svg class="icon"><use href="#mid"/></svg>中点</button>
        <button class="tool"><svg class="icon"><use href="#vertex"/></svg>顶点</button>
        <button class="tool"><svg class="icon"><use href="#coord"/></svg>坐标</button>
      </div>
      <div class="toolbar">
        <i class="grip"></i>
        <label class="combo short"><select aria-label="偏移方式"><option>不偏移</option></select><svg class="caret"><use href="#caret"/></svg></label>
        <i class="sep"></i>
        <label class="field">X=<span class="spin"><input type="text" value="0"><svg><use href="#spin"/></svg></span>mm</label>
        <label class="field">Y=<span class="spin"><input type="text" value="0"><svg><use href="#spin"/></svg></span>mm</label>
        <i class="sep"></i>
        <label class="check"><input type="checkbox">旋转</label>
        <label class="field"><span class="spin angle"><input type="text" value="0.000" aria-label="旋转角度"><svg><use href="#spin"/></svg></span>°</label>
      </div>
    </div>

    <div class="rebar">
      <div class="handle">
        <svg viewBox="0 0 10 10"><path d="M.5.5h9v9h-9z" fill="#eee" stroke="#444"/><path d="M2 2l6 6M8 2L2 8" stroke="#222" stroke-width="1.500"/><path d="M0 .5h10" stroke="#a33"/></svg>
        <i></i>
      </div>
      <div class="rebar-body">
        <div class="toolbar">
          <button class="tool" aria-label="第一条"><svg class="icon"><use href="#first"/></svg></button>
          <button class="tool" aria-label="上一条"><svg class="icon"><use href="#prev"/></svg></button>
          <button class="tool" aria-label="下一条"><svg class="icon"><use href="#next"/></svg></button>
          <button class="tool" aria-label="最后一条"><svg class="icon"><use href="#last"/></svg></button>
          <i class="sep"></i>
          <button class="tool" aria-label="上移"><svg class="icon"><use href="#up"/></svg></button>
          <button class="tool" aria-label="下移"><svg class="icon"><use href="#down"/></svg></button>
          <i class="sep"></i>
          <button class="tool off"><svg class="icon"><use href="#insert"/></svg>插入</button>
          <button class="tool off"><svg class="icon"><use href="#remove"/></svg>删除</button>
          <button class="tool off"><svg class="icon"><use href="#scale"/></svg>缩尺配筋</button>
          <button class="tool off"><svg class="icon"><use href="#info"/></svg>钢筋信息</button>
          <button class="tool off"><svg class="icon"><use href="#lib"/></svg>钢筋图库</button>
          <button class="tool"><svg class="icon"><use href="#other"/></svg>其他<svg class="caret"><use href="#caret"/></svg></button>
          <button class="tool">关闭</button>
          <i class="sep"></i>
          <span class="total">单构件钢筋总重(kg) : 0</span>
        </div>
        <div class="sheet">
          <table>
            <colgroup><col class="c32"><col class="c73"><col class="c56"><col class="c36"><col class="c33"><col class="c201"><col class="c166"><col class="c156"><col class="c61"><col class="c38"><col class="c38"><col class="c50"><col class="c61"><col class="c61"><col class="c71"><col class="c71"></colgroup>
            <tr><th></th><th class="cur">筋号</th><th>直径<kbd>(mm)</kbd></th><th>级别</th><th>图号</th><th>图形</th><th>计算公式</th><th>公式描述</th><th>长度<kbd>(mm)</kbd></th><th>根数</th><th>搭接</th><th>损耗<kbd>(%)</kbd></th><th>单重<kbd>(kg)</kbd></th><th>总重<kbd>(kg)</kbd></th><th>钢筋归类</th><th>搭接形式</th></tr>
            <tr><td class="num"><kbd>1*</kbd></td><td class="sel"></td><td></td><td></td><td></td><td></td><td></td><td></td><td></td><td></td><td></td><td></td><td></td><td></td><td></td><td></td></tr>
          </table>
          <div class="hbar wide">
            <button aria-label="向左滚动"><svg><use href="#s-left"/></svg></button>
            <i class="thumb"></i><i class="after"></i>
            <button aria-label="向右滚动"><svg><use href="#s-right"/></svg></button>
          </div>
        </div>
      </div>
    </div>
  </section>
</div>

<footer class="status">
  <div class="st1"><kbd>X=44693 Y=13603</kbd></div>
  <div class="st2">层高<kbd>:3m</kbd></div>
  <div class="st3">底标高<kbd>:8.95m</kbd></div>
  <div class="st4"><kbd>0</kbd></div>
  <div class="st5"></div>
  <div class="st6"><kbd>746.6 FPS</kbd></div>
</footer>

<div class="taskbar">
  <button class="start" aria-label="开始"><svg viewBox="0 0 16 16"><path d="M0 2.300L6.500 1.400v6.100H0zM7.300 1.300L16 0v7.500H7.300zM0 8.300h6.500v6.200L0 13.600zM7.300 8.300H16V16l-8.700-1.300z" fill="#fff"/></svg></button>
  <label class="search">
    <svg viewBox="0 0 22 22"><circle cx="11" cy="11" r="9" fill="none" stroke="#fff" stroke-width="3"/></svg>
    <input type="text" placeholder="在这里输入你要搜索的内容">
    <svg class="mic" viewBox="0 0 12 18"><rect x="3.500" y=".5" width="5" height="11" rx="1.500" fill="none" stroke="#bbb"/><path d="M1 8v5.500h10V8M6 14v3M3.500 17h5" fill="none" stroke="#bbb"/></svg>
  </label>
  <button class="task" aria-label="任务视图"><svg viewBox="0 0 24 24"><path d="M6.500 5.500h11v13h-11zM4 7H2.500v10H4M20 7h1.500v10H20" fill="none" stroke="#fff" stroke-width="1.300"/></svg></button>
  <button class="task pin" aria-label="风车"><svg viewBox="0 0 24 24"><g fill="#eee"><path d="M11 2v9q-7-1-7-5t7-4zM22 11h-9q1-7 5-7t4 7zM13 22v-9q7 1 7 5t-7 4zM2 13h9q-1 7-5 7t-4-7z"/><circle cx="7" cy="7" r="4.500"/><circle cx="17" cy="7" r="4.500"/><circle cx="7" cy="17" r="4.500"/><circle cx="17" cy="17" r="4.500"/></g><path d="M12 3q-3 5 0 9t0 9M3 12q5 3 9 0t9 0" stroke="#061014" fill="none" stroke-width="1.300"/></svg></button>
  <button class="task pin" aria-label="浏览器"><svg viewBox="0 0 24 24"><path d="M5 13h14q0-8-7-8t-7 8q1 6 7 6 5 0 6-4" fill="none" stroke="#eee" stroke-width="4"/><path d="M3 22Q0 14 9 6t12-4q2 1 0 5" fill="none" stroke="#eee" stroke-width="1.500"/></svg></button>
  <button class="task pin" aria-label="提醒"><svg viewBox="0 0 28 24"><path d="M11 15q1-3-2-3t-3 4q1 4 5 4 6-1 6-7-2-6-8-6-7 1-7 8 1 7 7 8M16 6q-5-4-10-1" fill="none" stroke="#ddd" stroke-width="1.500"/><path d="M20 0q4 1 4 5v4l2 3H14l2-3V5q0-4 4-5zM18 12h4v2h-4z" fill="#f2a900"/></svg></button>
  <button class="task pin" aria-label="Edge"><svg viewBox="0 0 24 24"><path d="M2 12Q3 2 13 2q9 1 9 12H9q0 5 6 5 3 0 6-2v4q-3 2-7 2-9 0-10-8 0-6 6-8-6 0-8 5zM9 10h7q0-4-3-4t-4 4z" fill="#0a78d7"/></svg></button>
  <button class="task" aria-label="Internet Explorer"><svg viewBox="0 0 24 24"><path d="M5 13h14q0-8-7-8t-7 8q1 6 7 6 5 0 6-4" fill="none" stroke="#42b4f2" stroke-width="4"/><path d="M3 22Q0 14 9 6t12-4q2 1 0 5" fill="none" stroke="#f6cf3c" stroke-width="2"/></svg></button>
  <button class="task run" aria-label="文件资源管理器"><svg viewBox="0 0 24 24"><path d="M2 3h8l2 3h10v15H2z" fill="#fbe08c"/><path d="M2 8h20v3H2z" fill="#f3c850"/><path d="M5 21v-8h14v8h-4v-4H9v4z" fill="#3fb1ec"/></svg></button>
  <button class="task run" aria-label="广联达G+"><svg viewBox="0 0 24 24"><path d="M21 2Q15 4 12 5q-6 3-5 9 2 5 7 3 4-2 2-6l6-1q2 8-4 12-8 3-14-3-4-7 1-13 5-5 16-4z" fill="#1390e8"/></svg></button>
  <button class="task run cur" aria-label="钢筋算量"><svg><use href="#app"/></svg></button>
  <button class="task run" aria-label="便笺"><svg viewBox="0 0 24 24"><rect width="24" height="24" rx="2" fill="#f2930f"/><path d="M3 5l13-2 3 16-13 2z" fill="#fff8df"/><path d="M6 8l9-1M7 12l8-1M7 16l5-1" stroke="#963"/><path d="M10 15L21 3l2 2-10 12z" fill="#7b3b12"/></svg></button>
  <button class="task run" aria-label="360浏览器"><svg viewBox="0 0 24 24"><circle cx="12" cy="12" r="10" fill="#4cb32b"/><path d="M7 12h10q0-5-5-5t-5 5q0 5 5 5 4 0 5-2" fill="none" stroke="#fff" stroke-width="2.500"/><path d="M2 20Q-1 14 9 6t14-4" fill="none" stroke="#b7ea8a" stroke-width="1.500"/></svg></button>
  <div class="tray">
    <span class="links">链接</span>
    <span class="cpu">42%<br>CPU使用</span>
    <svg class="t16" viewBox="0 0 16 16"><path d="M2 11l6-6 6 6" fill="none" stroke="#fff" stroke-width="1.500"/></svg>
    <svg class="t16" viewBox="0 0 16 16"><path d="M5.500 5.500h9v6h-9zM1 3h5v3q-2 3-4 0zM2 1v2M5 1v2M3.500 7v6" fill="none" stroke="#fff"/><path d="M7 7h6v3H7z" fill="#fff"/></svg>
    <svg class="t16" viewBox="0 0 16 16"><path d="M2 13Q3 4 13 2M5 14q1-6 9-8M8 14q1-3 6-4" fill="none" stroke="#ccc" stroke-width="1.300"/><circle cx="12" cy="13" r="1.500" fill="#fff"/></svg>
    <svg class="kbd" viewBox="0 0 24 14"><path d="M.5.500h23v13H.5z" fill="none" stroke="#fff"/><path d="M3 4h18M3 7h18" stroke="#fff" stroke-dasharray="2 1"/><path d="M6 10.500h12" stroke="#fff"/></svg>
    <span class="lang">英</span>
    <svg class="t16" viewBox="0 0 28 28"><path d="M2 6L23 1q3 0 3 3l1 18q0 3-3 3L7 27q-3 0-3-3z" fill="#f4511e"/><path d="M20 7q-11-2-11 3 0 3 6 4 5 1 4 4-2 4-12 1" fill="none" stroke="#fff" stroke-width="4"/></svg>
    <span class="clock">16:40<br>2018/3/20</span>
    <button class="notes" aria-label="通知"><svg viewBox="0 0 26 26"><path d="M2 2h16v13h-8l-3 4v-4H2z" fill="#fff"/><path d="M5 6h10M5 10h10" stroke="#000"/><circle cx="17" cy="17" r="8" fill="#444" stroke="#999"/><text x="17" y="22" text-anchor="middle" fill="#fff" font-size="13">1</text></svg></button>
  </div>
</div>

</body>
</html>
```

FILE: styles.css
```css
* {
  box-sizing: border-box;
}
body {
  margin: 0;
  height: 100vh;
  display: flex;
  flex-direction: column;
  overflow: hidden;
  background: #f0f0f0;
  font: 12px/16px "Open Sans", "Noto Sans CJK SC", sans-serif;
  color: #000;
}
button, select, input {
  font: inherit;
  color: inherit;
  margin: 0;
  padding: 0;
  border: 0;
  background: none;
}
a {
  color: inherit;
  text-decoration: none;
}
svg {
  display: block;
  flex: none;
}
.sprite {
  position: absolute;
  width: 0;
  height: 0;
}
.icon {
  width: 16px;
  height: 16px;
}
.caret {
  width: 7px;
  height: 4px;
}
.more {
  width: 9px;
  height: 6px;
  margin: 0 3px 12px auto;
}
kbd {
  font: 11px/16px "Liberation Mono", monospace;
}

/* title bar */
.titlebar {
  display: flex;
  flex: none;
  align-items: center;
  height: 23px;
  padding-left: 2px;
  gap: 5px;
  background: #fff;
}
.titlebar h1 {
  margin: 0;
  flex: 1;
  font: 13px/16px Roboto, "Noto Sans CJK SC", sans-serif;
  white-space: nowrap;
}
.winbtns {
  display: flex;
}
.winbtns button {
  width: 46px;
  display: flex;
  justify-content: center;
}
.winbtns svg {
  width: 10px;
  height: 10px;
}
.bubble {
  position: absolute;
  left: 1113px;
  top: -28px;
  width: 48px;
  height: 46px;
  padding-top: 26px;
  border: 2px solid #b5c4b8;
  border-radius: 50%;
  background: #3cc45c;
  box-shadow: 0 1px 3px #999;
  color: #fff;
  font: bold 11px/16px "DejaVu Sans", sans-serif;
  text-align: center;
}

/* menus */
.menubar {
  display: flex;
  flex: none;
  align-items: center;
  height: 30px;
  padding-left: 6px;
  gap: 12px;
  white-space: nowrap;
}
.menubar > .tool {
  margin-left: -8px;
}
.ticker {
  flex: 1;
  max-width: 208px;
  color: #067a7a;
  text-align: right;
}
.account {
  display: flex;
  align-items: center;
  gap: 6px;
  width: 240px;
  height: 28px;
  margin-left: auto;
  background: #f8f8f8;
}
.ime {
  position: absolute;
  left: 880px;
  top: 25px;
  width: 196px;
  height: 24px;
  display: flex;
  align-items: center;
  justify-content: space-between;
  padding: 0 4px 0 22px;
  border: 1px solid #a5bdd6;
  background: #fff;
}
.ime svg {
  width: 16px;
  height: 16px;
}
.ime .ime-logo {
  position: absolute;
  left: -12px;
  top: -4px;
  width: 28px;
  height: 28px;
}
.ime b {
  font-size: 15px;
  color: #1b6fc4;
}

/* toolbars */
.bars-top {
  display: flex;
  flex: none;
  height: 31px;
  padding-bottom: 2px;
}
.toolbar {
  display: flex;
  align-items: center;
  background: linear-gradient(#fbfbfb, #f2f2f2);
  border-radius: 3px;
  white-space: nowrap;
}
.tool {
  display: flex;
  align-items: center;
  gap: 3px;
  height: 23px;
  padding: 0 3px;
  border: 1px solid transparent;
  flex: none;
}
.tool .caret {
  margin: 0 -1px 0 -2px;
}
.tool.wide .caret {
  margin: 0 0 0 3px;
}
.tool.on {
  border-color: #0078d7;
  background: #dbe9f5;
}
.tool.off {
  color: #838383;
}
.tool.off .icon {
  filter: grayscale(1);
}
.tool.white {
  background: #fff;
}
.sep {
  width: 1px;
  height: 17px;
  margin: 0 3px 0 2px;
  background: #bdbdbd;
}
.grip {
  width: 3px;
  height: 15px;
  margin: 0 1px 0 4px;
  background: repeating-linear-gradient(#b8b8b8 0 2px, transparent 2px 4px);
}
.files {
  width: 150px;
}
.files .tool .caret {
  margin: 0 -1px 0 2px;
}
.common {
  width: 551px;
  padding-left: 3px;
  margin-right: 3px;
}
.views {
  flex: 1;
}
.row {
  display: flex;
  flex: none;
  height: 27px;
}
.row.draw {
  height: 30px;
  padding-top: 2px;
}
.row.axis {
  padding-left: 646px;
}
.row.snap {
  height: 30px;
  padding: 1px 0;
  gap: 3px;
}
.grow {
  flex: 1;
}
.stub {
  width: 31px;
  margin: 0 3px 0 4px;
}
.combo {
  display: grid;
  align-items: center;
  width: 69px;
  height: 23px;
  margin-right: 3px;
  background: linear-gradient(to left, #f7f7f7 12px, #fff 12px);
}
.combo.short {
  width: 58px;
}
.combo.last {
  margin: 0 -3px 0 0;
}
.combo select, .combo .caret {
  grid-area: 1 / 1;
}
.combo select {
  width: 100%;
  padding-left: 2px;
  appearance: none;
}
.combo .caret {
  justify-self: end;
  margin-right: 2px;
  pointer-events: none;
}
.snap .combo {
  margin-right: 1px;
}
.snap .sep {
  margin: 0 2px 0 1px;
}
.field {
  display: flex;
  align-items: center;
  gap: 3px;
  margin-right: 3px;
  color: #838383;
}
.field:last-child {
  margin-left: 5px;
}
.spin {
  display: grid;
  align-items: center;
  width: 58px;
  height: 23px;
  border: 1px solid #6d6d6d;
}
.spin.angle {
  width: 68px;
}
.spin input, .spin svg {
  grid-area: 1 / 1;
}
.spin input {
  width: 100%;
  padding-right: 18px;
  text-align: right;
}
.spin svg {
  width: 6px;
  height: 16px;
  justify-self: end;
  margin-right: 4px;
}
.check {
  display: flex;
  align-items: center;
  gap: 8px;
}
.check input {
  appearance: none;
  width: 11px;
  height: 11px;
  border: 1px solid #999;
  background: #f8f8f8;
}

/* main area */
.main {
  display: flex;
  flex: 1;
  min-height: 0;
}
.nav {
  width: 169px;
  margin-right: 5px;
  display: flex;
  flex-direction: column;
  gap: 1px;
  padding-bottom: 3px;
}
.nav-head {
  display: flex;
  align-items: center;
  gap: 8px;
  height: 15px;
  margin-bottom: 1px;
  padding-right: 4px;
  background: #0052de;
  color: #fff;
}
.nav-head span {
  flex: 1;
}
.nav-head svg {
  width: 10px;
  height: 10px;
}
.nav-btn {
  flex: none;
  height: 21px;
  border: 1px solid #a0a0a0;
  border-top-color: #fff;
  background: #f0f0f0;
  text-align: center;
}
.nav-body {
  flex: 1;
  min-height: 0;
  display: flex;
  flex-direction: column;
  border: 1px solid #a0a0a0;
  border-left-width: 2px;
}
.nav-tools {
  display: flex;
  flex: none;
  align-items: center;
  gap: 7px;
  height: 27px;
  padding-left: 5px;
  background: linear-gradient(#fff, #eee);
}
.nav-tools svg {
  width: 16px;
  height: 16px;
}
.tree-box {
  flex: 1;
  min-height: 0;
  display: grid;
  grid-template: minmax(0, 1fr) 17px / minmax(0, 1fr) 17px;
  border-top: 1px solid #828790;
  background: #fff;
}
.tree {
  margin: 0;
  padding: 0;
  overflow: hidden;
  list-style: none;
}
.tree li {
  display: flex;
  align-items: center;
  height: 16px;
  white-space: nowrap;
}
.tree span {
  padding-left: 4px;
}
.guide {
  width: 44px;
  height: 16px;
  margin-left: -1px;
}
.guide.fold {
  width: 25px;
}
.picked span {
  padding-right: 4px;
}
.picked .icon, .picked span {
  background: #d9d9d9;
}
.vbar, .hbar {
  display: flex;
  background: #f0f0f0;
}
.vbar {
  flex-direction: column;
}
.vbar button, .hbar button {
  display: flex;
  align-items: center;
  justify-content: center;
  width: 17px;
  height: 17px;
}
.vbar svg, .hbar svg {
  width: 10px;
  height: 10px;
}
.thumb {
  background: #cdcdcd;
}
.vbar .before {
  flex: 172;
}
.vbar .thumb {
  flex: 237;
  margin-right: 2px;
}
.vbar .after {
  flex: 24;
}
.hbar .thumb {
  flex: 1;
  margin-bottom: 2px;
}
.work {
  flex: 1;
  min-width: 0;
  display: flex;
  flex-direction: column;
}
.canvas {
  width: 100%;
  height: 278px;
  background: #000;
}
.mark {
  font: 15px Roboto, sans-serif;
  fill: #d8d8d8;
  text-anchor: middle;
}

/* rebar table */
.rebar {
  flex: 1;
  min-height: 0;
  display: flex;
  padding-top: 2px;
}
.handle {
  width: 12px;
  display: flex;
  flex-direction: column;
  align-items: center;
  gap: 4px;
  padding-top: 2px;
}
.handle svg {
  width: 10px;
  height: 10px;
}
.handle i {
  flex: 1;
  width: 8px;
  background: radial-gradient(circle, #b4b4b4 1px, transparent 2px) 0 0 / 4px 5px;
}
.rebar-body {
  flex: 1;
  min-width: 0;
  display: flex;
  flex-direction: column;
}
.rebar-body .toolbar {
  flex: none;
  height: 28px;
}
.total {
  padding-left: 2px;
}
.sheet {
  flex: 1;
  display: flex;
  flex-direction: column;
  justify-content: space-between;
  margin: 0 1px 3px 0;
  padding: 1px;
  border: 1px solid #a0a0a0;
  background: #fff;
  overflow: hidden;
}
table {
  width: 1204px;
  table-layout: fixed;
  border-collapse: collapse;
}
th, td {
  height: 19px;
  padding: 0;
  border: 1px solid #c0c0c0;
  font-weight: normal;
  line-height: 16px;
  text-align: center;
  white-space: nowrap;
}
th {
  border-top: 0;
  background: linear-gradient(#fff, #ececec);
}
th:first-child, td:first-child {
  border-left: 0;
}
th.cur {
  background: linear-gradient(#fbd99b, #f3c063);
  color: #600060;
}
td.num {
  background: #ffd18b;
  color: #600060;
}
td.sel {
  background: #d8e9f7;
  border-right-color: #000;
}
.c32 { width: 32px; }
.c33 { width: 33px; }
.c36 { width: 36px; }
.c38 { width: 38px; }
.c50 { width: 50px; }
.c56 { width: 56px; }
.c61 { width: 61px; }
.c71 { width: 71px; }
.c73 { width: 73px; }
.c156 { width: 156px; }
.c166 { width: 166px; }
.c201 { width: 201px; }
.hbar.wide .thumb {
  flex: 820;
}
.hbar.wide .after {
  flex: 322;
}

/* status bar */
.status {
  display: flex;
  flex: none;
  gap: 2px;
  height: 20px;
  background: #f0f0f0;
}
.status div {
  border: 1px solid #d2d2d2;
  background: linear-gradient(#fff, #f0f0f0);
  white-space: nowrap;
}
.st1 { width: 147px; }
.st2 { width: 77px; }
.st3 { width: 99px; }
.st4 { width: 49px; }
.st5 { flex: 1; }
.st6 { width: 70px; }
.status .st2, .status .st3 {
  padding-left: 1px;
}

/* taskbar */
.taskbar {
  display: flex;
  flex: none;
  height: 40px;
  background: linear-gradient(to right, #000, #020e12 40%, #020e12 90%, #000);
  color: #fff;
}
.start {
  width: 48px;
  display: flex;
  align-items: center;
  justify-content: center;
}
.start svg {
  width: 16px;
  height: 16px;
}
.search {
  display: flex;
  align-items: center;
  gap: 5px;
  width: 344px;
  padding: 0 14px 0 8px;
  background: #333;
}
.search > svg {
  width: 22px;
  height: 22px;
}
.search .mic {
  width: 12px;
  height: 18px;
}
.search input {
  flex: 1;
  min-width: 0;
  font-size: 14px;
  outline: 0;
}
.search input::placeholder {
  color: #999;
}
.task {
  width: 48px;
  display: flex;
  align-items: center;
  justify-content: center;
}
.task.pin {
  width: 52px;
}
.task svg {
  width: 24px;
  height: 24px;
}
.task.run {
  background: linear-gradient(#76b9ed, #76b9ed) center bottom / 40px 2px no-repeat;
}
.task.cur {
  background-color: #333d41;
  background-size: 48px 2px;
}
.tray {
  flex: 1;
  display: flex;
  align-items: center;
  justify-content: flex-end;
  gap: 10px;
  padding-right: 16px;
  text-align: center;
  white-space: nowrap;
}
.tray .links, .tray .cpu {
  margin-right: 8px;
}
.cpu, .clock {
  line-height: 18px;
}
.t16 {
  width: 16px;
  height: 16px;
}
.kbd {
  width: 24px;
  height: 14px;
  margin-left: 20px;
}
.clock {
  margin-left: 4px;
}
.notes {
  margin-left: 8px;
}
.notes svg {
  width: 26px;
  height: 26px;
}
```
